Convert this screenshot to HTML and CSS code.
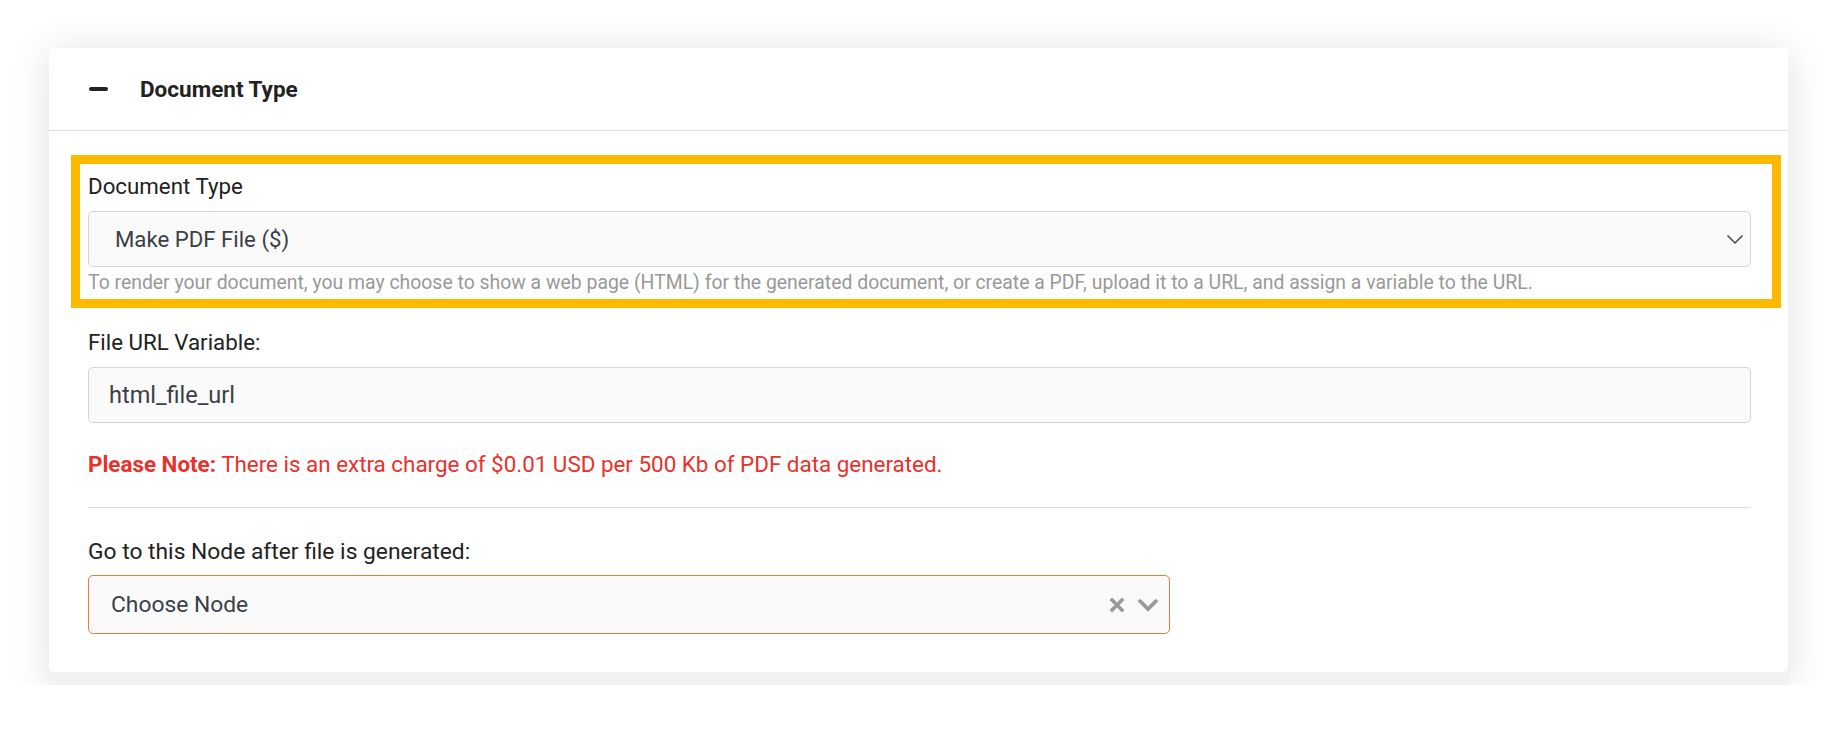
FILE: index.html
```html
<!DOCTYPE html>
<html>
<head>
  <meta charset="utf-8">
  <title>Document Type</title>
  <link rel="stylesheet" href="styles.css">
</head>
<body>
 <div class="panel">
  <div class="card">
   <div class="card-head">
    <span class="collapse-icon"></span>
    <span class="card-title">Document Type</span>
   </div>

   <div class="card-body">
    <div class="group highlighted">
     <label class="field-label">Document Type</label>
     <div class="select">
      <span class="select-value">Make PDF File ($)</span>
      <svg class="select-caret" width="18" height="11" viewBox="0 0 18 11">
       <path d="M1.5 1.5 L9 9 L16.5 1.5" fill="none" stroke="#444" stroke-width="1.5"/>
      </svg>
     </div>
     <div class="help">To render your document, you may choose to show a web page (HTML) for the generated document, or create a PDF, upload it to a URL, and assign a variable to the URL.</div>
    </div>

    <div class="group">
     <label class="field-label">File URL Variable:</label>
     <div class="input">html_file_url</div>
    </div>

    <p class="note"><b>Please Note:</b> There is an extra charge of $0.01 USD per 500 Kb of PDF data generated.</p>

    <hr class="divider">

    <div class="group">
     <label class="field-label wide">Go to this Node after file is generated:</label>
     <div class="node-select">
      <span class="node-value">Choose Node</span>
      <span class="node-icons">
       <svg width="16" height="16" viewBox="0 0 16 16">
        <path d="M1.8 1.8 L14.2 14.2 M14.2 1.8 L1.8 14.2" stroke="#999" stroke-width="3.6"/>
       </svg>
       <svg width="22" height="16" viewBox="0 0 22 16">
        <path d="M2 3 L11 12 L20 3" fill="none" stroke="#999" stroke-width="3.8"/>
       </svg>
      </span>
     </div>
    </div>
   </div>
  </div>
 </div>
</body>
</html>
```

FILE: styles.css
```css
body {
  margin: 0;
  background-color: #fff;
  font-family: Roboto, "Liberation Sans", sans-serif;
  color: #222;
}

.panel {
  margin: 48px 48px 0 49px;
  padding-bottom: 13px;
  background-color: #f2f2f2;
  border-radius: 5px;
  box-shadow: 0 4px 40px rgba(0, 0, 0, 0.13);
}

.card {
  background-color: #fff;
  border-radius: 5px;
  padding-bottom: 38px;
}

.card-head {
  display: flex;
  align-items: center;
  height: 82px;
  padding-left: 40px;
  border-bottom: 1px solid #ddd;
}

.collapse-icon {
  width: 19px;
  height: 4px;
  border-radius: 2px;
  background-color: #222;
  margin-right: 32px;
}

.card-title {
  font-size: 22.5px;
  font-weight: bold;
}

.card-body {
  padding: 42px 37px 0 39px;
}

.group {
  position: relative;
}

/* yellow callout drawn round the first field */
.highlighted::after {
  content: "";
  position: absolute;
  top: -18px;
  left: -17px;
  right: -30px;
  bottom: -14px;
  border: 9px solid #fbb900;
  pointer-events: none;
}

.field-label {
  display: block;
  font-size: 22.3px;
  line-height: 26px;
  margin-bottom: 12px;
}

.field-label.wide {
  font-size: 22.8px;
}

.select,
.input,
.node-select {
  display: flex;
  align-items: center;
  box-sizing: border-box;
  background-color: #fafafa;
  border: 1px solid #d4d4d4;
  border-radius: 5px;
  font-size: 22.2px;
  color: #3a4047;
}

.select {
  height: 56px;
  padding: 0 6px 0 26px;
  justify-content: space-between;
}

.help {
  margin-top: 5px;
  font-size: 19.4px;
  line-height: 22px;
  color: #999;
}

.group + .group {
  margin-top: 35px;
}

.input {
  height: 56px;
  padding-left: 20px;
  font-size: 23.5px;
}

.note {
  margin: 28px 0 0 0;
  font-size: 22.4px;
  line-height: 26px;
  color: #e8312a;
}

.divider {
  border: none;
  border-top: 1px solid #ddd;
  margin: 30px 0 31px 0;
}

.node-select {
  width: 1082px;
  height: 59px;
  margin-top: -2px;
  padding: 0 10px 0 22px;
  justify-content: space-between;
  border-color: #f07a3e;
  font-size: 22.8px;
}

.node-icons {
  display: flex;
  align-items: center;
  gap: 12px;
}
```
